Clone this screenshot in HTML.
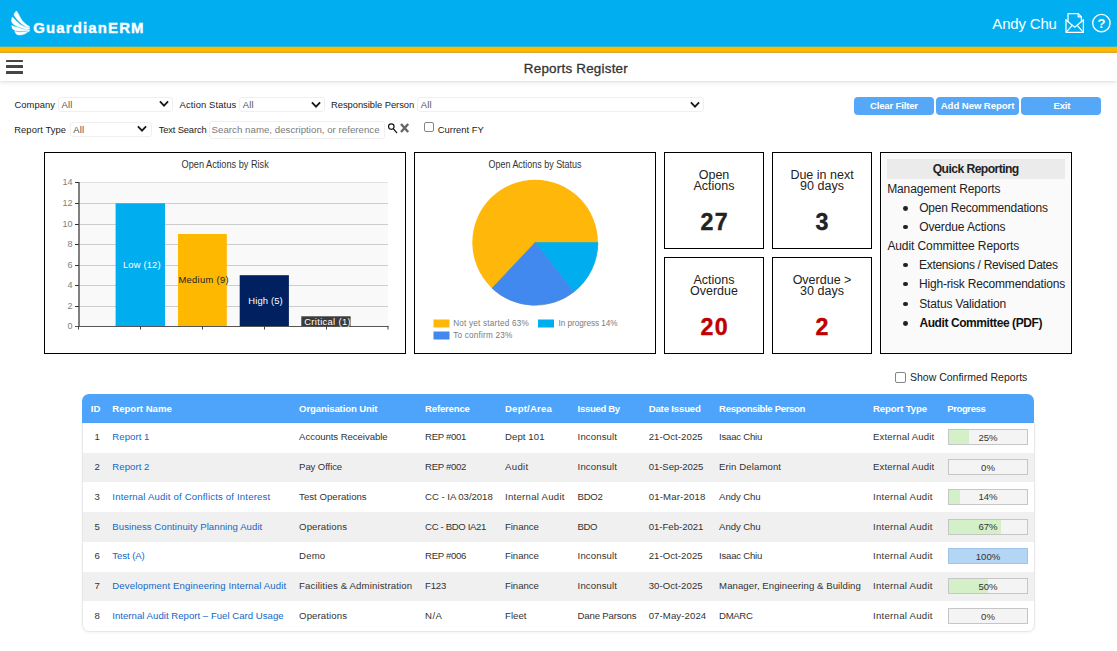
<!DOCTYPE html>
<html lang="en">
<head>
<meta charset="utf-8">
<title>Reports Register</title>
<style>
*{box-sizing:border-box;margin:0;padding:0}
html,body{width:1117px;height:651px;overflow:hidden;background:#fff}
body{position:relative;font-family:"Liberation Sans",sans-serif;color:#222}
.abs{position:absolute}
.t{position:absolute;white-space:nowrap;line-height:1}
#hdr{left:0;top:0;width:1117px;height:47px;background:#01aeef}
#yel{left:0;top:45.8px;width:1117px;height:7px;background:linear-gradient(#01aeef 0,#5cb49a 0.7px,#c9c255 1.4px,#ffb900 2.2px,#ffb900 5px,#dfa226 6.4px,#e9c98a 7px)}
#tbar{left:0;top:53px;width:1117px;height:28px;background:#fff;box-shadow:0 1px 2px rgba(0,0,0,.07),0 2px 5px rgba(0,0,0,.07)}
.hb{position:absolute;left:6px;width:17.4px;height:2.9px;background:#454545;border-radius:.5px}
.sel{position:absolute;height:15px;border:1px solid #efefef;border-radius:3px;background:#fff}
.btn{position:absolute;top:97px;height:18px;background:#55a7f8;border-radius:4px}
.cb{position:absolute;width:10.5px;height:10.5px;border:1px solid #858585;border-radius:2px;background:#fff}
.box{position:absolute;border:1px solid #000;background:#fff}
.dot{position:absolute;left:903.4px;width:4.8px;height:4.8px;border-radius:50%;background:#222}
#thead{left:82px;top:394px;width:952px;height:29px;background:#4ea4fa;border-radius:7px 7px 0 0}
.pb{position:absolute;left:948px;width:80px;height:16px;border:1px solid #c6c6c6;background:#f4f4f4}
.pb i{position:absolute;left:0;top:0;height:100%;background:#d4f0c9}
</style>
</head>
<body>
<!-- HEADER -->
<div class="abs" id="hdr"></div>
<div class="abs" id="yel"></div>
<div class="abs" id="tbar"></div>
<svg class="abs" style="left:10px;top:9px" width="22" height="28" viewBox="10 9 22 28" fill="#fff" stroke="#fff" stroke-width="0.55" stroke-linejoin="round">
  <path d="M16.5 10.9 C18.5 13.5 20.3 18.3 22.5 21 C24.5 23.5 27.5 25.5 29.8 26.9 C29 27.3 28.4 27.4 27.8 27.4 C25.5 26.7 23.6 25.4 21.8 23.9 C19.5 21.9 16.3 19 13.9 14.9 C14.4 13.2 15.3 11.9 16.5 10.9Z"/>
  <path d="M12.4 16.9 C13.4 18.3 14.5 19.4 15.4 20.1 C17.3 22.1 19 23.9 20.9 25.1 C23 26.4 25.5 27.3 27.4 27.8 L30 28.3 C28.8 29 27.6 29.4 26.4 29.4 C24 28.8 21.7 27.9 19.5 27 C17.5 26.4 15.8 25.9 14.5 25.1 C13 23.9 12.1 22.8 11.6 21.4 C11.5 19.8 11.8 18.2 12.4 16.9Z"/>
  <path d="M11.8 25.4 C13.5 26.5 15.3 26.9 17.2 27.1 C19.3 27.9 21.5 28.8 23.8 29.4 C25.5 29.8 27 29.9 28.3 29.8 L30 30.1 C27.5 30.9 24.7 31.2 21.8 31.1 C19.7 31.1 17.6 31 15.8 30.7 C14.5 30.3 13.4 29.7 12.6 28.8 C12.1 27.8 11.8 26.6 11.8 25.4Z"/>
  <path d="M14.8 31.5 C17 32 19.5 32.2 21.8 32.1 C23.8 32 25.8 31.8 27.4 31.4 L29.8 30.6 C29.1 31.4 28.3 31.8 27.4 32.1 C25.8 33.5 23.8 34.5 21.8 34.8 C20 35 18.3 34.9 16.8 34.4 C15.9 33.6 15.2 32.7 14.8 31.5Z"/>
</svg>
<svg class="abs" style="left:1062px;top:10px" width="26" height="26" viewBox="1062 10 26 26" fill="none" stroke="#fff" stroke-width="1.25" stroke-linejoin="round" stroke-linecap="round">
  <path d="M1066 19.8 V32.3 H1083.4 V19.8"/>
  <path d="M1066 19.9 L1074.7 27.2 L1083.4 19.9"/>
  <path d="M1066.3 32.1 L1072.2 25.4 M1083.1 32.1 L1077.2 25.4"/>
  <path d="M1068 21.3 V13.6 H1078.2 L1081.4 16.8 V21.3"/>
  <path d="M1078.2 13.6 V16.8 H1081.4"/>
</svg>
<svg class="abs" style="left:1090px;top:11px" width="24" height="24" viewBox="1090 11 24 24">
  <circle cx="1101.4" cy="23.05" r="8.7" fill="none" stroke="#fff" stroke-width="1.35"/>
  <text x="1101.4" y="27.8" text-anchor="middle" font-family="Liberation Sans, sans-serif" font-size="13" font-weight="bold" fill="#fff">?</text>
</svg>
<div class="hb" style="top:59.6px"></div><div class="hb" style="top:65.3px"></div><div class="hb" style="top:70.9px"></div>

<!-- FILTERS -->
<div class="sel" style="left:58px;top:97px;width:115px"></div>
<div class="sel" style="left:239px;top:97px;width:86px"></div>
<div class="sel" style="left:417px;top:97px;width:287px"></div>
<div class="sel" style="left:69.5px;top:122px;width:82px"></div>
<div class="sel" style="left:209px;top:120.5px;width:175.5px;height:18px"></div>
<svg class="abs" style="left:159px;top:100.4px" width="10" height="8" viewBox="0 0 10 8"><path d="M0.9 1.4 L5 5.7 L9.1 1.4" fill="none" stroke="#1a1a1a" stroke-width="1.8"/></svg>
<svg class="abs" style="left:310.8px;top:100.5px" width="10" height="8" viewBox="0 0 10 8"><path d="M0.9 1.4 L5 5.7 L9.1 1.4" fill="none" stroke="#1a1a1a" stroke-width="1.8"/></svg>
<svg class="abs" style="left:690px;top:100.5px" width="10" height="8" viewBox="0 0 10 8"><path d="M0.9 1.4 L5 5.7 L9.1 1.4" fill="none" stroke="#1a1a1a" stroke-width="1.8"/></svg>
<svg class="abs" style="left:136.5px;top:125.4px" width="10" height="8" viewBox="0 0 10 8"><path d="M0.9 1.4 L5 5.7 L9.1 1.4" fill="none" stroke="#1a1a1a" stroke-width="1.8"/></svg>
<svg class="abs" style="left:386px;top:121px" width="26" height="14" viewBox="386 121 26 14" fill="none"><circle cx="391.3" cy="126.6" r="2.75" stroke="#111" stroke-width="1.15"/><path d="M393.4 128.8 L396.7 132.6" stroke="#111" stroke-width="1.25" stroke-linecap="round"/><path d="M401 124 L408.2 132 M408.2 124 L401 132" stroke="#666" stroke-width="2.4"/></svg>
<div class="cb" style="left:424px;top:122px;width:10px;height:10px"></div>
<div class="btn" style="left:854px;width:80px"></div>
<div class="btn" style="left:936px;width:83px"></div>
<div class="btn" style="left:1021px;width:80px"></div>

<!-- BAR CHART -->
<div class="box" style="left:44px;top:152px;width:362px;height:202px"></div>
<svg class="abs" id="bar" style="left:44px;top:152px" width="362" height="202" viewBox="44 152 362 202">
  <rect x="80" y="182" width="308" height="144" fill="#f9f9f9"/>
  <path d="M80 182.5H388" stroke="#e2e2e2"/>
  <path d="M80 203.5H388M80 224.5H388M80 244.5H388M80 265.5H388M80 285.5H388M80 306.5H388" stroke="#cdcdcd"/>
  <rect x="115.6" y="203.3" width="49.4" height="123" fill="#00adef"/>
  <rect x="178" y="234" width="48.8" height="92" fill="#ffb800"/>
  <rect x="239.7" y="275.2" width="49.2" height="51" fill="#002060"/>
  <rect x="301.3" y="316.3" width="49.3" height="10" fill="#3b3b3b"/>
  <path d="M79 182V327" stroke="#808080" stroke-width="2"/>
  <path d="M75 326.5H388.5" stroke="#555" stroke-width="1.2"/>
  <path d="M75 182.5H79M75 203.5H79M75 224.5H79M75 244.5H79M75 265.5H79M75 285.5H79M75 306.5H79" stroke="#333"/>
  <path d="M78.5 326V329.5M140.5 326V329.5M202.5 326V329.5M264.5 326V329.5M326.5 326V329.5M388 326V329.5" stroke="#444"/>
  <g font-family="Liberation Sans, sans-serif" font-size="9" fill="#808080" text-anchor="end">
    <text x="72.6" y="185">14</text><text x="72.6" y="206">12</text><text x="72.6" y="227">10</text><text x="72.6" y="247">8</text>
    <text x="72.6" y="268">6</text><text x="72.6" y="288">4</text><text x="72.6" y="309">2</text><text x="72.6" y="329">0</text>
  </g>
  <text x="181.6" y="167.8" textLength="87.2" lengthAdjust="spacingAndGlyphs" font-family="Liberation Sans, sans-serif" font-size="10.4" fill="#333">Open Actions by Risk</text>
  <g font-family="Liberation Sans, sans-serif" font-size="9.4" lengthAdjust="spacingAndGlyphs">
    <text x="123" y="268.2" textLength="37.6" fill="#fff">Low (12)</text>
    <text x="178.4" y="283.2" textLength="50.2" fill="#222">Medium (9)</text>
    <text x="248.3" y="304.4" textLength="34.4" fill="#fff">High (5)</text>
    <text x="304.2" y="324.5" textLength="46.4" fill="#fff">Critical (1)</text>
  </g>
</svg>

<!-- PIE CHART -->
<div class="box" style="left:414px;top:152px;width:242px;height:202px"></div>
<svg class="abs" id="pie" style="left:414px;top:152px" width="242" height="202" viewBox="414 152 242 202">
  <circle cx="535.1" cy="242.5" r="62.8" fill="#ffb70a"/>
  <path d="M535.1 242.5 L597.9 242.5 A62.8 62.8 0 0 1 573.76 291.99 Z" fill="#00adef" stroke="#00adef" stroke-width=".6"/>
  <path d="M535.1 242.5 L573.76 291.99 A62.8 62.8 0 0 1 492.03 288.21 Z" fill="#4189ee" stroke="#4189ee" stroke-width=".6"/>
  <text x="488.5" y="167.8" textLength="93" lengthAdjust="spacingAndGlyphs" font-family="Liberation Sans, sans-serif" font-size="10.4" fill="#333">Open Actions by Status</text>
  <rect x="433.5" y="319.5" width="16" height="8" fill="#ffb70a"/>
  <rect x="538" y="319.5" width="16" height="8" fill="#00adef"/>
  <rect x="433.5" y="331.5" width="16" height="8" fill="#4189ee"/>
  <g font-family="Liberation Sans, sans-serif" font-size="8.2" fill="#7a7a7a" lengthAdjust="spacingAndGlyphs">
    <text x="453.2" y="325.9" textLength="75.6">Not yet started 63%</text>
    <text x="558.4" y="325.9" textLength="59.2">In progress 14%</text>
    <text x="453.2" y="337.9" textLength="59">To confirm 23%</text>
  </g>
</svg>

<!-- STATS -->
<div class="box" style="left:664px;top:152px;width:100px;height:97px"></div>
<div class="box" style="left:772px;top:152px;width:100px;height:97px"></div>
<div class="box" style="left:664px;top:257px;width:100px;height:97px"></div>
<div class="box" style="left:772px;top:257px;width:100px;height:97px"></div>

<!-- QUICK REPORTING -->
<div class="box" style="left:880px;top:152px;width:192px;height:202px"></div>
<div class="abs" style="left:882px;top:154px;width:188px;height:198px;background:#fafafa"></div>
<div class="abs" style="left:887px;top:159px;width:178px;height:20px;background:#ebebeb"></div>
<div class="dot" style="top:205.8px"></div><div class="dot" style="top:224.5px"></div>
<div class="dot" style="top:262.6px"></div><div class="dot" style="top:281.7px"></div><div class="dot" style="top:301.6px"></div><div class="dot" style="top:320.9px"></div>

<!-- SHOW CONFIRMED -->
<div class="cb" style="left:895px;top:372px"></div>

<!-- TABLE -->
<div class="abs" id="thead"></div>
<div class="abs" style="left:82px;top:422.7px;width:952px;height:29.8px;background:#fff"></div>
<div class="pb" style="top:429.25px"><i style="width:19.5px"></i></div>
<div class="abs" style="left:82px;top:452.5px;width:952px;height:29.8px;background:#f0f0f0"></div>
<div class="pb" style="top:459.05px"><i style="width:0.0px"></i></div>
<div class="abs" style="left:82px;top:482.3px;width:952px;height:29.8px;background:#fff"></div>
<div class="pb" style="top:488.85px"><i style="width:10.9px"></i></div>
<div class="abs" style="left:82px;top:512.1px;width:952px;height:29.8px;background:#f0f0f0"></div>
<div class="pb" style="top:518.65px"><i style="width:52.3px"></i></div>
<div class="abs" style="left:82px;top:541.9px;width:952px;height:29.8px;background:#fff"></div>
<div class="pb" style="top:548.45px;border-color:#9fc3ea"><i style="width:100%;background:#b5d5f5"></i></div>
<div class="abs" style="left:82px;top:571.7px;width:952px;height:29.8px;background:#f0f0f0"></div>
<div class="pb" style="top:578.25px"><i style="width:39.0px"></i></div>
<div class="abs" style="left:82px;top:601.5px;width:952px;height:29.8px;background:#fff"></div>
<div class="pb" style="top:608.05px"><i style="width:0.0px"></i></div>
<div class="abs" style="left:81.5px;top:423px;width:953px;height:209px;border:1px solid #e8e8e8;border-top:none;border-radius:0 0 7px 7px;box-shadow:0 1px 3px rgba(0,0,0,.05)"></div>
<div class="t" id="t0" style="left:33.3px;top:21.19px;font-size:14.9px;color:#fff;font-weight:bold;letter-spacing:1.176px;-webkit-text-stroke:.4px #fff;">GuardianERM</div>
<div class="t" id="t1" style="left:992.3px;top:16.10px;font-size:15px;color:#fff;letter-spacing:-0.172px;">Andy Chu</div>
<div class="t" id="t2" style="left:523.8px;top:61.96px;font-size:13.4px;color:#333;letter-spacing:0.232px;-webkit-text-stroke:.3px #333;">Reports Register</div>
<div class="t" id="t3" style="left:14.4px;top:99.74px;font-size:9.4px;color:#1a1a1a;letter-spacing:0.068px;">Company</div>
<div class="t" id="t4" style="left:179.6px;top:99.74px;font-size:9.4px;color:#1a1a1a;letter-spacing:0.119px;">Action Status</div>
<div class="t" id="t5" style="left:331px;top:99.74px;font-size:9.4px;color:#1a1a1a;letter-spacing:-0.039px;">Responsible Person</div>
<div class="t" id="t6" style="left:14.2px;top:124.74px;font-size:9.4px;color:#1a1a1a;letter-spacing:0.099px;">Report Type</div>
<div class="t" id="t7" style="left:158.7px;top:124.74px;font-size:9.4px;color:#1a1a1a;letter-spacing:-0.156px;">Text Search</div>
<div class="t" id="t8" style="left:437.7px;top:124.74px;font-size:9.4px;color:#1a1a1a;letter-spacing:0.034px;">Current FY</div>
<div class="t" id="t9" style="left:61.6px;top:99.64px;font-size:9.4px;color:#555;letter-spacing:0.193px;">All</div>
<div class="t" id="t10" style="left:242.7px;top:99.64px;font-size:9.4px;color:#555;letter-spacing:0.193px;">All</div>
<div class="t" id="t11" style="left:420.8px;top:99.64px;font-size:9.4px;color:#555;letter-spacing:0.193px;">All</div>
<div class="t" id="t12" style="left:73.2px;top:124.64px;font-size:9.4px;color:#555;letter-spacing:0.193px;">All</div>
<div class="t" id="t13" style="left:211.6px;top:124.79px;font-size:9.7px;color:#7a7a7a;letter-spacing:0.014px;">Search name, description, or reference</div>
<div class="t" id="t14" style="left:744px;width:300px;text-align:center;top:100.87px;font-size:9.6px;color:#fff;font-weight:bold;letter-spacing:-0.177px;text-indent:-0.177px;">Clear Filter</div>
<div class="t" id="t15" style="left:827.6px;width:300px;text-align:center;top:100.87px;font-size:9.6px;color:#fff;font-weight:bold;letter-spacing:-0.073px;text-indent:-0.073px;">Add New Report</div>
<div class="t" id="t16" style="left:912px;width:300px;text-align:center;top:100.87px;font-size:9.6px;color:#fff;font-weight:bold;letter-spacing:-0.152px;text-indent:-0.152px;">Exit</div>
<div class="t" id="t17" style="left:564px;width:300px;text-align:center;top:168.52px;font-size:12.5px;color:#222;">Open</div>
<div class="t" id="t18" style="left:564px;width:300px;text-align:center;top:180.42px;font-size:12.5px;color:#222;">Actions</div>
<div class="t" id="t19" style="left:564.7px;width:300px;text-align:center;top:210.86px;font-size:23.2px;color:#222;font-weight:bold;letter-spacing:1.4px;-webkit-text-stroke:.4px currentColor;">27</div>
<div class="t" id="t20" style="left:672px;width:300px;text-align:center;top:168.52px;font-size:12.5px;color:#222;">Due in next</div>
<div class="t" id="t21" style="left:672px;width:300px;text-align:center;top:180.42px;font-size:12.5px;color:#222;">90 days</div>
<div class="t" id="t22" style="left:672.7px;width:300px;text-align:center;top:210.86px;font-size:23.2px;color:#222;font-weight:bold;letter-spacing:1.4px;-webkit-text-stroke:.4px currentColor;">3</div>
<div class="t" id="t23" style="left:564px;width:300px;text-align:center;top:273.52px;font-size:12.5px;color:#222;">Actions</div>
<div class="t" id="t24" style="left:564px;width:300px;text-align:center;top:285.42px;font-size:12.5px;color:#222;">Overdue</div>
<div class="t" id="t25" style="left:564.7px;width:300px;text-align:center;top:315.86px;font-size:23.2px;color:#c00000;font-weight:bold;letter-spacing:1.4px;-webkit-text-stroke:.4px currentColor;">20</div>
<div class="t" id="t26" style="left:672px;width:300px;text-align:center;top:273.52px;font-size:12.5px;color:#222;">Overdue &gt;</div>
<div class="t" id="t27" style="left:672px;width:300px;text-align:center;top:285.42px;font-size:12.5px;color:#222;">30 days</div>
<div class="t" id="t28" style="left:672.7px;width:300px;text-align:center;top:315.86px;font-size:23.2px;color:#c00000;font-weight:bold;letter-spacing:1.4px;-webkit-text-stroke:.4px currentColor;">2</div>
<div class="t" id="t29" style="left:826px;width:300px;text-align:center;top:162.87px;font-size:12.2px;color:#222;font-weight:bold;letter-spacing:-0.588px;text-indent:-0.588px;">Quick Reporting</div>
<div class="t" id="t30" style="left:887.2px;top:182.84px;font-size:12px;color:#222;letter-spacing:-0.123px;">Management Reports</div>
<div class="t" id="t31" style="left:919.2px;top:201.84px;font-size:12px;color:#222;letter-spacing:-0.208px;">Open Recommendations</div>
<div class="t" id="t32" style="left:919.2px;top:220.54px;font-size:12px;color:#222;letter-spacing:-0.124px;">Overdue Actions</div>
<div class="t" id="t33" style="left:887.4px;top:239.64px;font-size:12px;color:#222;letter-spacing:-0.098px;">Audit Committee Reports</div>
<div class="t" id="t34" style="left:919px;top:258.54px;font-size:12px;color:#222;letter-spacing:-0.313px;">Extensions / Revised Dates</div>
<div class="t" id="t35" style="left:919px;top:277.84px;font-size:12px;color:#222;letter-spacing:-0.189px;">High-risk Recommendations</div>
<div class="t" id="t36" style="left:919.2px;top:298.04px;font-size:12px;color:#222;letter-spacing:-0.140px;">Status Validation</div>
<div class="t" id="t37" style="left:919.4px;top:316.84px;font-size:12px;color:#111;font-weight:bold;letter-spacing:-0.416px;">Audit Committee (PDF)</div>
<div class="t" id="t38" style="left:910px;top:372.11px;font-size:10.5px;color:#222;">Show Confirmed Reports</div>
<div class="t" id="t39" style="left:90.7px;top:404.07px;font-size:9.6px;color:#fff;font-weight:bold;letter-spacing:0.203px;">ID</div>
<div class="t" id="t40" style="left:112.3px;top:404.07px;font-size:9.6px;color:#fff;font-weight:bold;letter-spacing:-0.029px;">Report Name</div>
<div class="t" id="t41" style="left:299.09999999999997px;top:404.07px;font-size:9.6px;color:#fff;font-weight:bold;letter-spacing:-0.134px;">Organisation Unit</div>
<div class="t" id="t42" style="left:425.09999999999997px;top:404.07px;font-size:9.6px;color:#fff;font-weight:bold;letter-spacing:-0.201px;">Reference</div>
<div class="t" id="t43" style="left:505.0px;top:404.07px;font-size:9.6px;color:#fff;font-weight:bold;letter-spacing:0.186px;">Dept/Area</div>
<div class="t" id="t44" style="left:577.6px;top:404.07px;font-size:9.6px;color:#fff;font-weight:bold;letter-spacing:-0.348px;">Issued By</div>
<div class="t" id="t45" style="left:648.7px;top:404.07px;font-size:9.6px;color:#fff;font-weight:bold;letter-spacing:-0.169px;">Date Issued</div>
<div class="t" id="t46" style="left:719.1px;top:404.07px;font-size:9.6px;color:#fff;font-weight:bold;letter-spacing:-0.346px;">Responsible Person</div>
<div class="t" id="t47" style="left:873.0px;top:404.07px;font-size:9.6px;color:#fff;font-weight:bold;letter-spacing:-0.115px;">Report Type</div>
<div class="t" id="t48" style="left:947.3000000000001px;top:404.07px;font-size:9.6px;color:#fff;font-weight:bold;letter-spacing:-0.449px;">Progress</div>
<div class="t" id="t49" style="left:-52.900000000000006px;width:300px;text-align:center;top:432.17px;font-size:9.6px;color:#333;">1</div>
<div class="t" id="t50" style="left:112.3px;top:432.17px;font-size:9.6px;color:#1268c8;letter-spacing:0.050px;">Report 1</div>
<div class="t" id="t51" style="left:299.09999999999997px;top:432.17px;font-size:9.6px;color:#333;letter-spacing:-0.058px;">Accounts Receivable</div>
<div class="t" id="t52" style="left:425.09999999999997px;top:432.17px;font-size:9.6px;color:#333;letter-spacing:-0.345px;">REP #001</div>
<div class="t" id="t53" style="left:505.0px;top:432.17px;font-size:9.6px;color:#333;letter-spacing:0.083px;">Dept 101</div>
<div class="t" id="t54" style="left:577.6px;top:432.17px;font-size:9.6px;color:#333;letter-spacing:0.122px;">Inconsult</div>
<div class="t" id="t55" style="left:648.7px;top:432.17px;font-size:9.6px;color:#333;letter-spacing:0.061px;">21-Oct-2025</div>
<div class="t" id="t56" style="left:719.1px;top:432.17px;font-size:9.6px;color:#333;letter-spacing:-0.233px;">Isaac Chiu</div>
<div class="t" id="t57" style="left:873.0px;top:432.17px;font-size:9.6px;color:#333;letter-spacing:0.157px;">External Audit</div>
<div class="t" id="t58" style="left:838px;width:300px;text-align:center;top:432.87px;font-size:9.6px;color:#333;">25%</div>
<div class="t" id="t59" style="left:-52.900000000000006px;width:300px;text-align:center;top:461.97px;font-size:9.6px;color:#333;">2</div>
<div class="t" id="t60" style="left:112.3px;top:461.97px;font-size:9.6px;color:#1268c8;letter-spacing:0.050px;">Report 2</div>
<div class="t" id="t61" style="left:299.09999999999997px;top:461.97px;font-size:9.6px;color:#333;letter-spacing:-0.109px;">Pay Office</div>
<div class="t" id="t62" style="left:425.09999999999997px;top:461.97px;font-size:9.6px;color:#333;letter-spacing:-0.345px;">REP #002</div>
<div class="t" id="t63" style="left:505.0px;top:461.97px;font-size:9.6px;color:#333;letter-spacing:0.345px;">Audit</div>
<div class="t" id="t64" style="left:577.6px;top:461.97px;font-size:9.6px;color:#333;letter-spacing:0.122px;">Inconsult</div>
<div class="t" id="t65" style="left:648.7px;top:461.97px;font-size:9.6px;color:#333;letter-spacing:-0.071px;">01-Sep-2025</div>
<div class="t" id="t66" style="left:719.1px;top:461.97px;font-size:9.6px;color:#333;letter-spacing:0.093px;">Erin Delamont</div>
<div class="t" id="t67" style="left:873.0px;top:461.97px;font-size:9.6px;color:#333;letter-spacing:0.157px;">External Audit</div>
<div class="t" id="t68" style="left:838px;width:300px;text-align:center;top:462.67px;font-size:9.6px;color:#333;">0%</div>
<div class="t" id="t69" style="left:-52.900000000000006px;width:300px;text-align:center;top:491.77px;font-size:9.6px;color:#333;">3</div>
<div class="t" id="t70" style="left:112.3px;top:491.77px;font-size:9.6px;color:#1268c8;letter-spacing:0.168px;">Internal Audit of Conflicts of Interest</div>
<div class="t" id="t71" style="left:299.09999999999997px;top:491.77px;font-size:9.6px;color:#333;letter-spacing:0.026px;">Test Operations</div>
<div class="t" id="t72" style="left:425.09999999999997px;top:491.77px;font-size:9.6px;color:#333;letter-spacing:-0.044px;">CC - IA 03/2018</div>
<div class="t" id="t73" style="left:505.0px;top:491.77px;font-size:9.6px;color:#333;letter-spacing:0.270px;">Internal Audit</div>
<div class="t" id="t74" style="left:577.6px;top:491.77px;font-size:9.6px;color:#333;letter-spacing:-0.335px;">BDO2</div>
<div class="t" id="t75" style="left:648.7px;top:491.77px;font-size:9.6px;color:#333;letter-spacing:0.169px;">01-Mar-2018</div>
<div class="t" id="t76" style="left:719.1px;top:491.77px;font-size:9.6px;color:#333;letter-spacing:-0.093px;">Andy Chu</div>
<div class="t" id="t77" style="left:873.0px;top:491.77px;font-size:9.6px;color:#333;letter-spacing:0.270px;">Internal Audit</div>
<div class="t" id="t78" style="left:838px;width:300px;text-align:center;top:492.47px;font-size:9.6px;color:#333;">14%</div>
<div class="t" id="t79" style="left:-52.900000000000006px;width:300px;text-align:center;top:521.57px;font-size:9.6px;color:#333;">5</div>
<div class="t" id="t80" style="left:112.3px;top:521.57px;font-size:9.6px;color:#1268c8;letter-spacing:0.051px;">Business Continuity Planning Audit</div>
<div class="t" id="t81" style="left:299.09999999999997px;top:521.57px;font-size:9.6px;color:#333;letter-spacing:0.106px;">Operations</div>
<div class="t" id="t82" style="left:425.09999999999997px;top:521.57px;font-size:9.6px;color:#333;letter-spacing:-0.352px;">CC - BDO IA21</div>
<div class="t" id="t83" style="left:505.0px;top:521.57px;font-size:9.6px;color:#333;letter-spacing:-0.063px;">Finance</div>
<div class="t" id="t84" style="left:577.6px;top:521.57px;font-size:9.6px;color:#333;letter-spacing:-0.499px;">BDO</div>
<div class="t" id="t85" style="left:648.7px;top:521.57px;font-size:9.6px;color:#333;letter-spacing:-0.022px;">01-Feb-2021</div>
<div class="t" id="t86" style="left:719.1px;top:521.57px;font-size:9.6px;color:#333;letter-spacing:-0.093px;">Andy Chu</div>
<div class="t" id="t87" style="left:873.0px;top:521.57px;font-size:9.6px;color:#333;letter-spacing:0.270px;">Internal Audit</div>
<div class="t" id="t88" style="left:838px;width:300px;text-align:center;top:522.27px;font-size:9.6px;color:#333;">67%</div>
<div class="t" id="t89" style="left:-52.900000000000006px;width:300px;text-align:center;top:551.37px;font-size:9.6px;color:#333;">6</div>
<div class="t" id="t90" style="left:112.3px;top:551.37px;font-size:9.6px;color:#1268c8;letter-spacing:-0.083px;">Test (A)</div>
<div class="t" id="t91" style="left:299.09999999999997px;top:551.37px;font-size:9.6px;color:#333;letter-spacing:0.152px;">Demo</div>
<div class="t" id="t92" style="left:425.09999999999997px;top:551.37px;font-size:9.6px;color:#333;letter-spacing:-0.345px;">REP #006</div>
<div class="t" id="t93" style="left:505.0px;top:551.37px;font-size:9.6px;color:#333;letter-spacing:-0.063px;">Finance</div>
<div class="t" id="t94" style="left:577.6px;top:551.37px;font-size:9.6px;color:#333;letter-spacing:0.122px;">Inconsult</div>
<div class="t" id="t95" style="left:648.7px;top:551.37px;font-size:9.6px;color:#333;letter-spacing:0.061px;">21-Oct-2025</div>
<div class="t" id="t96" style="left:719.1px;top:551.37px;font-size:9.6px;color:#333;letter-spacing:-0.233px;">Isaac Chiu</div>
<div class="t" id="t97" style="left:873.0px;top:551.37px;font-size:9.6px;color:#333;letter-spacing:0.270px;">Internal Audit</div>
<div class="t" id="t98" style="left:838px;width:300px;text-align:center;top:552.07px;font-size:9.6px;color:#333;">100%</div>
<div class="t" id="t99" style="left:-52.900000000000006px;width:300px;text-align:center;top:581.17px;font-size:9.6px;color:#333;">7</div>
<div class="t" id="t100" style="left:112.3px;top:581.17px;font-size:9.6px;color:#1268c8;letter-spacing:0.130px;">Development Engineering Internal Audit</div>
<div class="t" id="t101" style="left:299.09999999999997px;top:581.17px;font-size:9.6px;color:#333;letter-spacing:0.144px;">Facilities &amp; Administration</div>
<div class="t" id="t102" style="left:425.09999999999997px;top:581.17px;font-size:9.6px;color:#333;letter-spacing:-0.219px;">F123</div>
<div class="t" id="t103" style="left:505.0px;top:581.17px;font-size:9.6px;color:#333;letter-spacing:-0.063px;">Finance</div>
<div class="t" id="t104" style="left:577.6px;top:581.17px;font-size:9.6px;color:#333;letter-spacing:0.122px;">Inconsult</div>
<div class="t" id="t105" style="left:648.7px;top:581.17px;font-size:9.6px;color:#333;letter-spacing:0.061px;">30-Oct-2025</div>
<div class="t" id="t106" style="left:719.1px;top:581.17px;font-size:9.6px;color:#333;letter-spacing:0.066px;">Manager, Engineering &amp; Building</div>
<div class="t" id="t107" style="left:873.0px;top:581.17px;font-size:9.6px;color:#333;letter-spacing:0.270px;">Internal Audit</div>
<div class="t" id="t108" style="left:838px;width:300px;text-align:center;top:581.87px;font-size:9.6px;color:#333;">50%</div>
<div class="t" id="t109" style="left:-52.900000000000006px;width:300px;text-align:center;top:610.97px;font-size:9.6px;color:#333;">8</div>
<div class="t" id="t110" style="left:112.3px;top:610.97px;font-size:9.6px;color:#1268c8;letter-spacing:0.019px;">Internal Audit Report – Fuel Card Usage</div>
<div class="t" id="t111" style="left:299.09999999999997px;top:610.97px;font-size:9.6px;color:#333;letter-spacing:0.106px;">Operations</div>
<div class="t" id="t112" style="left:425.09999999999997px;top:610.97px;font-size:9.6px;color:#333;letter-spacing:0.400px;">N/A</div>
<div class="t" id="t113" style="left:505.0px;top:610.97px;font-size:9.6px;color:#333;letter-spacing:0.051px;">Fleet</div>
<div class="t" id="t114" style="left:577.6px;top:610.97px;font-size:9.6px;color:#333;letter-spacing:-0.166px;">Dane Parsons</div>
<div class="t" id="t115" style="left:648.7px;top:610.97px;font-size:9.6px;color:#333;letter-spacing:0.097px;">07-May-2024</div>
<div class="t" id="t116" style="left:719.1px;top:610.97px;font-size:9.6px;color:#333;letter-spacing:-0.358px;">DMARC</div>
<div class="t" id="t117" style="left:873.0px;top:610.97px;font-size:9.6px;color:#333;letter-spacing:0.270px;">Internal Audit</div>
<div class="t" id="t118" style="left:838px;width:300px;text-align:center;top:611.67px;font-size:9.6px;color:#333;">0%</div>
</body>
</html>
